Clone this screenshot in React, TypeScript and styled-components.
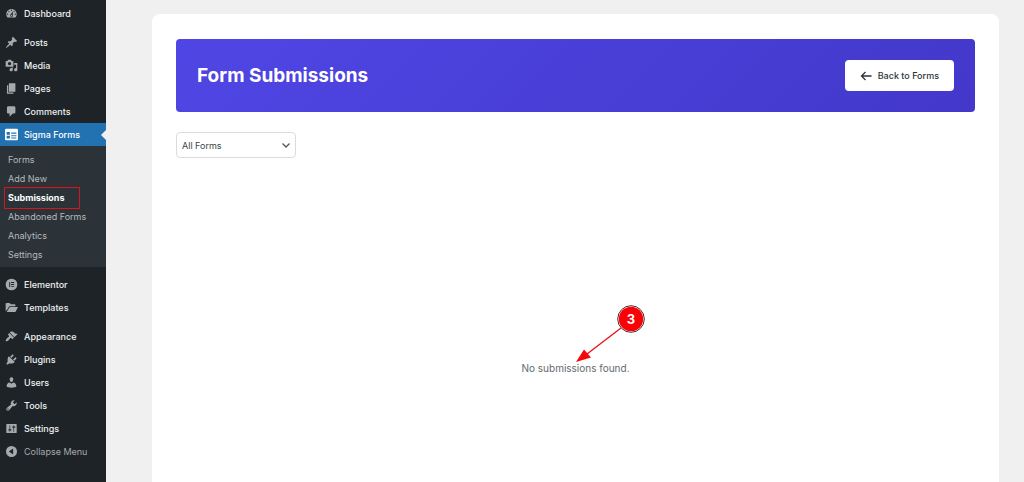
import React from "react";
import styled, { createGlobalStyle, css } from "styled-components";

const GlobalStyle = createGlobalStyle`
  *, *::before, *::after { box-sizing: border-box; }
  body {
    margin: 0;
    background: #f0f0f1;
    font-family: Inter, "Liberation Sans", sans-serif;
    font-size: 9px;
    color: #3c434a;
  }
  button, select { font: inherit; color: inherit; }
`;

const Shell = styled.div`
  display: flex;
  min-height: 100vh;
`;

const Sidebar = styled.nav`
  flex: 0 0 106px;
  padding-top: 2px;
  background: #1d2327;
`;

const MenuGroup = styled.ul`
  list-style: none;
  margin: 0 0 6px;
  padding: 0;
`;

const itemLayout = css`
  position: relative;
  display: flex;
  align-items: center;
  gap: 6px;
  width: 100%;
  height: 23px;
  padding: 0 0 0 5px;
  border: 0;
  line-height: 15px;
  text-decoration: none;
  white-space: nowrap;
`;

const MenuLink = styled.a<{ $active?: boolean }>`
  ${itemLayout}
  color: ${(p) => (p.$active ? "#ffffff" : "#f0f0f1")};
  background: ${(p) => (p.$active ? "#2271b1" : "transparent")};
  font-weight: 500;

  svg { color: ${(p) => (p.$active ? "#ffffff" : "#a7aaad")}; }

  ${(p) =>
    p.$active &&
    css`
      &::after {
        content: "";
        position: absolute;
        right: 0;
        top: 7px;
        border: 5px solid transparent;
        border-left-width: 0;
        border-right-color: #f0f0f1;
      }
    `}
`;

const CollapseButton = styled.button`
  ${itemLayout}
  background: transparent;
  color: #a7aaad;
`;

const MenuIcon = styled.svg`
  flex: none;
  width: 13px;
  height: 13px;
  fill: currentColor;
`;

const Submenu = styled.ul`
  list-style: none;
  margin: 0;
  padding: 4px 0 3px;
  background: #2c3338;
`;

const SubmenuLink = styled.a<{ $current?: boolean }>`
  position: relative;
  display: block;
  padding-left: 8px;
  line-height: 19px;
  text-decoration: none;
  white-space: nowrap;
  color: ${(p) => (p.$current ? "#ffffff" : "#b4b9be")};
  font-weight: ${(p) => (p.$current ? 700 : 400)};

  ${(p) =>
    p.$current &&
    css`
      &::after {
        content: "";
        position: absolute;
        inset: -1px 26px -2px 4px;
        border: 1px solid #d5161c;
      }
    `}
`;

const Main = styled.main`
  flex: 1;
  display: flex;
  min-width: 0;
  padding: 14px 25px 0 46px;
`;

const Card = styled.section`
  flex: 1;
  min-width: 0;
  padding: 25px 24px 0;
  border-radius: 8px 8px 0 0;
  background: #ffffff;
`;

const Banner = styled.header`
  display: flex;
  align-items: center;
  justify-content: space-between;
  padding: 21px;
  border-radius: 4px;
  background: linear-gradient(135deg, #4f46e5 0%, #4338ca 100%);
`;

const Title = styled.h1`
  margin: 0;
  color: #ffffff;
  font-size: 19px;
  font-weight: 700;
  line-height: 30px;
`;

const BackButton = styled.button`
  display: flex;
  align-items: center;
  gap: 6px;
  padding: 8px 15px;
  border: 0;
  border-radius: 4px;
  background: #ffffff;
  color: #2c3338;
  font-weight: 500;
  line-height: 15px;

  svg { width: 12px; height: 12px; }
`;

const Filter = styled.div`
  position: relative;
  width: 120px;
  margin-top: 20px;

  svg {
    position: absolute;
    right: 5px;
    top: 8px;
    width: 10px;
    height: 10px;
    pointer-events: none;
  }
`;

const FilterSelect = styled.select`
  display: block;
  width: 100%;
  height: 26px;
  padding: 0 20px 0 5px;
  appearance: none;
  border: 1px solid #dcdcde;
  border-radius: 4px;
  background: #ffffff;
  color: #3c434a;
`;

const EmptyState = styled.div`
  display: flex;
  justify-content: center;
  padding-top: 203px;
`;

const EmptyMessage = styled.p`
  position: relative;
  margin: 0;
  color: #646970;
  font-size: 10px;
  line-height: 15px;
`;

const Callout = styled.svg`
  position: absolute;
  left: 50%;
  bottom: 13px;
  width: 72px;
  height: 60px;
`;

const paths: Record<string, string> = {
  dashboard:
    "M3.76 16h12.48c1.1-1.37 1.76-3.11 1.76-5 0-4.42-3.58-8-8-8s-8 3.58-8 8c0 1.89.66 3.63 1.76 5zM10 4c.55 0 1 .45 1 1s-.45 1-1 1-1-.45-1-1 .45-1 1-1zM6 6c.55 0 1 .45 1 1s-.45 1-1 1-1-.45-1-1 .45-1 1-1zm8 0c.55 0 1 .45 1 1s-.45 1-1 1-1-.45-1-1 .45-1 1-1zm-5.37 5.55L12 7v6c0 1.1-.9 2-2 2s-2-.9-2-2c0-.57.24-1.08.63-1.45zM4 10c.55 0 1 .45 1 1s-.45 1-1 1-1-.45-1-1 .45-1 1-1zm12 0c.55 0 1 .45 1 1s-.45 1-1 1-1-.45-1-1 .45-1 1-1zm-5 3c0-.55-.45-1-1-1s-1 .45-1 1 .45 1 1 1 1-.45 1-1z",
  posts:
    "M10.44 3.02l1.82-1.82 6.36 6.35-1.83 1.82c-1.05-.68-2.48-.57-3.41.36l-.75.75c-.92.93-1.04 2.35-.35 3.41l-1.83 1.82-2.41-2.41-2.8 2.79c-.42.42-3.38 2.71-3.8 2.29s1.86-3.39 2.28-3.81l2.79-2.79L4.1 9.36l1.83-1.82c1.05.69 2.48.57 3.4-.36l.75-.75c.93-.92 1.05-2.35.36-3.41z",
  media:
    "M13 11V4c0-.55-.45-1-1-1h-1.67L9 1H5L3.67 3H2c-.55 0-1 .45-1 1v7c0 .55.45 1 1 1h10c.55 0 1-.45 1-1zM7 4.5c1.38 0 2.5 1.12 2.5 2.5S8.38 9.5 7 9.5 4.5 8.38 4.5 7 5.62 4.5 7 4.5zM14 6h5v10.5c0 1.38-1.12 2.5-2.5 2.5S14 17.88 14 16.5s1.12-2.5 2.5-2.5c.17 0 .34.02.5.05V9h-3V6zm-4 8.05V13h2v3.5c0 1.38-1.12 2.5-2.5 2.5S7 17.88 7 16.5 8.12 14 9.5 14c.17 0 .34.02.5.05z",
  pages: "M6 15V2h10v13H6zm-1 1h8v2H3V5h2v11z",
  comments:
    "M5 2h9c1.1 0 2 .9 2 2v7c0 1.1-.9 2-2 2h-2l-5 5v-5H5c-1.1 0-2-.9-2-2V4c0-1.1.9-2 2-2z",
  forms:
    "M2 1h16c1.1 0 2 .9 2 2v14c0 1.1-.9 2-2 2H2c-1.1 0-2-.9-2-2V3c0-1.1.9-2 2-2zM2.500 6v4.500h5V6zM9.500 7v2h8V7zM9.500 11v1.800h8V11zM2.500 12v4h5v-4zM9.500 14.500v1.800h8v-1.800z",
  elementor:
    "M10 1a9 9 0 1 0 0 18a9 9 0 1 0 0-18zM6.500 6v8h1.500V6zM9.500 6v1.500h4.500V6zM9.500 9.200v1.500h4.500V9.200zM9.500 12.500v1.500h4.500v-1.500z",
  templates:
    "M1 4c0-.6.4-1 1-1h5l2 2h6c.6 0 1 .4 1 1v2H6.500L3.500 13 1 15.500zM7.300 9.300H20L16.500 16c-.2.6-.7 1-1.500 1H2.500z",
  appearance:
    "M14.48 11.06L7.41 3.99l1.5-1.5c.5-.56 2.3-.47 3.51.32 1.21.8 1.43 1.28 2.91 2.1 1.18.64 2.45 1.26 4.45.85zm-.71.71L6.7 4.7 4.93 6.47c-.39.39-.39 1.02 0 1.41l1.06 1.06c.39.39.39 1.03 0 1.42-.6.6-1.43 1.11-2.21 1.69-.35.26-.7.53-1.01.84C1.43 14.23.4 16.08 1.4 17.07c.99 1 2.84-.03 4.18-1.36.31-.31.58-.66.85-1.02.57-.78 1.08-1.61 1.69-2.21.39-.39 1.02-.39 1.41 0l1.06 1.06c.39.39 1.02.39 1.41 0z",
  plugins:
    "M13.11 4.36L9.87 7.6 8 5.73l3.24-3.24c.35-.34 1.05-.2 1.56.32.52.51.66 1.21.31 1.55zm-8 1.77l.91-1.12 9.01 9.01-1.19.84c-.71.71-2.63 1.16-3.82 1.16H6.14L4.9 17.26c-.59.59-1.54.59-2.12 0-.59-.58-.59-1.53 0-2.12l1.24-1.24v-3.88c0-1.13.4-3.19 1.09-3.89zm7.26 3.97l3.24-3.24c.34-.35 1.04-.21 1.55.31.52.51.66 1.21.31 1.55l-3.24 3.25z",
  users:
    "M10 9.25c-2.27 0-2.73-3.44-2.73-3.44C7 4.02 7.82 2 9.97 2c2.16 0 2.98 2.02 2.71 3.81 0 0-.41 3.44-2.68 3.44zm0 2.57L12.72 10c2.39 0 4.52 2.33 4.52 4.53v2.49s-3.65 1.13-7.24 1.13c-3.65 0-7.24-1.13-7.24-1.13v-2.49c0-2.25 1.94-4.48 4.47-4.48z",
  tools:
    "M16.68 9.77c-1.34 1.34-3.3 1.67-4.95.99l-5.41 6.52c-.99.99-2.59.99-3.58 0s-.99-2.59 0-3.57l6.52-5.42c-.68-1.65-.35-3.61.99-4.95 1.28-1.28 3.12-1.62 4.72-1.06l-2.89 2.89 2.82 2.82 2.86-2.87c.53 1.58.18 3.39-1.08 4.65zM3.81 16.21c.4.39 1.04.39 1.43 0 .4-.4.4-1.04 0-1.43-.39-.4-1.03-.4-1.43 0-.39.39-.39 1.03 0 1.43z",
  settings:
    "M18 16V4c0-.55-.45-1-1-1H3c-.55 0-1 .45-1 1v12c0 .55.45 1 1 1h14c.55 0 1-.45 1-1zM8 11h1c.55 0 1 .45 1 1s-.45 1-1 1H8v1.5c0 .28-.22.5-.5.5s-.5-.22-.5-.5V13H6c-.55 0-1-.45-1-1s.45-1 1-1h1V5.5c0-.28.22-.5.5-.5s.5.22.5.5V11zm5-2h-1c-.55 0-1-.45-1-1s.45-1 1-1h1V5.5c0-.28.22-.5.5-.5s.5.22.5.5V7h1c.55 0 1 .45 1 1s-.45 1-1 1h-1v5.5c0 .28-.22.5-.5.5s-.5-.22-.5-.5V9z",
  collapse:
    "M10 1.500a8.500 8.500 0 1 0 0 17a8.500 8.500 0 1 0 0-17zM12.500 5.500v9L6 10z",
};

function Icon({ name }: { name: string }) {
  return (
    <MenuIcon viewBox="0 0 20 20" aria-hidden="true">
      <path fillRule="evenodd" d={paths[name]} />
    </MenuIcon>
  );
}

type Entry = { label: string; icon: string; children?: string[] };

const groups: Entry[][] = [
  [{ label: "Dashboard", icon: "dashboard" }],
  [
    { label: "Posts", icon: "posts" },
    { label: "Media", icon: "media" },
    { label: "Pages", icon: "pages" },
    { label: "Comments", icon: "comments" },
    {
      label: "Sigma Forms",
      icon: "forms",
      children: ["Forms", "Add New", "Submissions", "Abandoned Forms", "Analytics", "Settings"],
    },
  ],
  [
    { label: "Elementor", icon: "elementor" },
    { label: "Templates", icon: "templates" },
  ],
  [
    { label: "Appearance", icon: "appearance" },
    { label: "Plugins", icon: "plugins" },
    { label: "Users", icon: "users" },
    { label: "Tools", icon: "tools" },
    { label: "Settings", icon: "settings" },
  ],
];

function AdminMenu() {
  return (
    <Sidebar aria-label="Main menu">
      {groups.map((group, index) => {
        const last = index === groups.length - 1;
        return (
          <MenuGroup key={index}>
            {group.map((entry) => (
              <li key={entry.label}>
                <MenuLink href="#" $active={Boolean(entry.children)}>
                  <Icon name={entry.icon} />
                  {entry.label}
                </MenuLink>
                {entry.children && (
                  <Submenu>
                    {entry.children.map((child) => (
                      <li key={child}>
                        <SubmenuLink href="#" $current={child === "Submissions"}>
                          {child}
                        </SubmenuLink>
                      </li>
                    ))}
                  </Submenu>
                )}
              </li>
            ))}
            {last && (
              <li>
                <CollapseButton type="button">
                  <Icon name="collapse" />
                  Collapse Menu
                </CollapseButton>
              </li>
            )}
          </MenuGroup>
        );
      })}
    </Sidebar>
  );
}

export default function App() {
  return (
    <>
      <GlobalStyle />
      <Shell>
        <AdminMenu />
        <Main>
          <Card>
            <Banner>
              <Title>Form Submissions</Title>
              <BackButton type="button">
                <svg viewBox="0 0 12 12" fill="none" stroke="currentColor" strokeWidth="1.3" aria-hidden="true">
                  <path d="M11.500 6H1.500M5.500 2L1.500 6l4 4" />
                </svg>
                Back to Forms
              </BackButton>
            </Banner>
            <Filter>
              <FilterSelect aria-label="Filter by form" defaultValue="all">
                <option value="all">All Forms</option>
              </FilterSelect>
              <svg viewBox="0 0 10 10" fill="none" stroke="#50575e" strokeWidth="1.3" aria-hidden="true">
                <path d="M1.500 3.500L5 7l3.500-3.500" />
              </svg>
            </Filter>
            <EmptyState>
              <EmptyMessage>
                No submissions found.
                <Callout viewBox="0 0 72 60" aria-hidden="true">
                  <path d="M46 25L12 51" stroke="#e8141c" strokeWidth="1.400" />
                  <path d="M1 59L9 46.500L16 54.500z" fill="#f5060c" />
                  <circle cx="56" cy="16" r="13.300" fill="#fff" stroke="#4a2a2c" strokeWidth="1" />
                  <circle cx="56" cy="16" r="12.200" fill="#fb0007" />
                  <text x="56" y="21" textAnchor="middle" fontSize="13" fontWeight="700" fill="#fff">
                    3
                  </text>
                </Callout>
              </EmptyMessage>
            </EmptyState>
          </Card>
        </Main>
      </Shell>
    </>
  );
}
